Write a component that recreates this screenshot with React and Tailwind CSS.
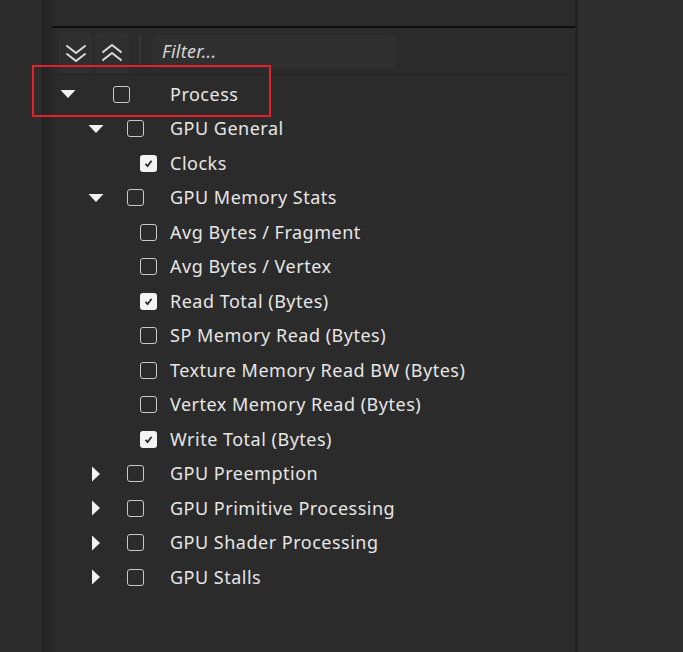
const rows = [
  { label: 'Process', level: 0, arrow: 'down', checked: false },
  { label: 'GPU General', level: 1, arrow: 'down', checked: false },
  { label: 'Clocks', level: 2, checked: true },
  { label: 'GPU Memory Stats', level: 1, arrow: 'down', checked: false },
  { label: 'Avg Bytes / Fragment', level: 2, checked: false },
  { label: 'Avg Bytes / Vertex', level: 2, checked: false },
  { label: 'Read Total (Bytes)', level: 2, checked: true },
  { label: 'SP Memory Read (Bytes)', level: 2, checked: false },
  { label: 'Texture Memory Read BW (Bytes)', level: 2, checked: false },
  { label: 'Vertex Memory Read (Bytes)', level: 2, checked: false },
  { label: 'Write Total (Bytes)', level: 2, checked: true },
  { label: 'GPU Preemption', level: 1, arrow: 'right', checked: false },
  { label: 'GPU Primitive Processing', level: 1, arrow: 'right', checked: false },
  { label: 'GPU Shader Processing', level: 1, arrow: 'right', checked: false },
  { label: 'GPU Stalls', level: 1, arrow: 'right', checked: false },
]

const Arrow = ({ dir }) =>
  dir === 'down' ? (
    <svg width="16" height="10" viewBox="0 0 16 10"><path d="M0.5 1 L15.5 1 L8 9 Z" fill="#f2f2f2" /></svg>
  ) : (
    <svg width="10" height="16" viewBox="0 0 10 16"><path d="M1 0.5 L9 8 L1 15.5 Z" fill="#f2f2f2" /></svg>
  )

// double chevron, drawn to match the thin toolbar glyphs
const DoubleChevron = ({ up }) => (
  <svg width="22" height="19" viewBox="0 0 22 19">
    <g stroke="#dcdcdc" strokeWidth="2" fill="none" strokeLinecap="round" strokeLinejoin="round">
      {up ? (
        <>
          <path d="M2 9 L11 2 L20 9" />
          <path d="M2 17 L11 10 L20 17" />
        </>
      ) : (
        <>
          <path d="M2 2 L11 9 L20 2" />
          <path d="M2 10 L11 17 L20 10" />
        </>
      )}
    </g>
  </svg>
)

const Checkbox = ({ checked }) =>
  checked ? (
    <div className="w-[17px] h-[17px] rounded-[3px] bg-[#f4f4f4] flex items-center justify-center">
      <svg width="11" height="11" viewBox="0 0 11 11">
        <path d="M2.5 5.8 L4.6 8 L8.6 2.8" stroke="#2b2b2b" strokeWidth="1.8" fill="none" />
      </svg>
    </div>
  ) : (
    <div className="w-[17px] h-[17px] rounded-[3px] border-[1.5px] border-[#c9c9c9]" />
  )

const Row = ({ row }) => (
  <div className="h-[34.5px] flex items-center">
    {row.level === 2 ? (
      <div className="w-[88px] shrink-0" />
    ) : (
      <>
        <div className={`${row.level === 0 ? 'w-[8px]' : 'w-[36px]'} shrink-0`} />
        <div className="w-[16px] flex justify-center shrink-0">
          <Arrow dir={row.arrow} />
        </div>
        <div className={`${row.level === 0 ? 'w-[37px]' : 'w-[23px]'} shrink-0`} />
      </>
    )}
    <Checkbox checked={row.checked} />
    <div className={`${row.level === 0 ? 'w-[40px]' : row.level === 1 ? 'w-[26px]' : 'w-[13px]'} shrink-0`} />
    <span className="text-[18px] tracking-[0.5px] text-[#e6e6e6] whitespace-nowrap">{row.label}</span>
  </div>
)

export default function App() {
  return (
    <div
      className="w-[683px] h-[652px] flex bg-[#2b2b2b] overflow-hidden"
      style={{ fontFamily: '"Noto Sans", "Open Sans", sans-serif' }}
    >
      {/* left side panel */}
      <div className="w-[42px] shrink-0 bg-[#2c2c2c]" />
      <div className="w-[10px] shrink-0 bg-[#262626] border-l border-[#1f1f1f]" />

      {/* main panel */}
      <div className="w-[523px] shrink-0 flex flex-col bg-[#2b2b2b]">
        <div className="h-[26px] shrink-0" />
        <div className="h-[2px] bg-[#0e0e0e] shrink-0" />
        <div className="h-[47px] shrink-0 flex items-end pl-[7px] border-b border-[#232323]">
          <div className="w-[33px] h-[42px] rounded-t-md bg-[#2f2f2f] flex justify-center pt-[12px]">
            <DoubleChevron />
          </div>
          <div className="w-[34px] h-[42px] rounded-t-md bg-[#2f2f2f] flex justify-center pt-[11px] ml-[3px]">
            <DoubleChevron up />
          </div>
          <div className="self-center w-[2px] h-[30px] bg-[#383838] ml-[10px]" />
          <div className="self-center w-[243px] h-[33px] rounded-md bg-[#303030] ml-[12px] flex items-center pl-[9px]">
            <span className="italic text-[18px] tracking-[0.3px] text-[#d6d6d6]">Filter...</span>
          </div>
        </div>
        <div className="relative pt-[2px]">
          {rows.map((r) => (
            <Row key={r.label} row={r} />
          ))}
          {/* red highlight */}
          <div className="absolute left-[-20px] top-[-10px] w-[239px] h-[52px] border-2 border-[#e5202a] pointer-events-none" />
        </div>
      </div>

      {/* divider + right panel */}
      <div className="w-[3px] shrink-0 bg-[#232323]" />
      <div className="flex-1 bg-[#2e2e2e]" />
    </div>
  )
}
